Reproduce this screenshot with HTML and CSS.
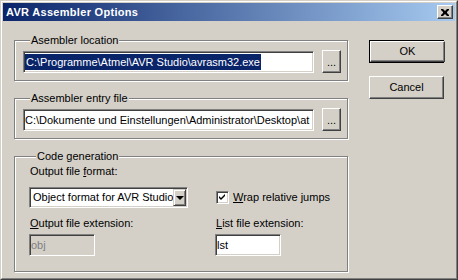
FILE: index.html
```html
<!DOCTYPE html>
<html lang="de">
<head>
  <meta charset="UTF-8">
  <title>AVR Assembler Options</title>
  <link rel="stylesheet" href="styles.css">
</head>
<body>
  <div class="window">
    <div class="frame">
      <div class="titlebar">
        <span class="title">AVR Assembler Options</span>
        <span class="close">
          <svg width="8" height="7" viewBox="0 0 8 7"><path d="M0 0h2l2 2l2 -2h2v1l-2 2v1l2 2v1h-2l-2 -2l-2 2h-2v-1l2 -2v-1l-2 -2z" fill="#000"/></svg>
        </span>
      </div>

      <div class="client">
        <div class="groups">
          <fieldset class="group">
            <legend>Asembler location</legend>
            <div class="path-row">
              <div class="edit path"><span class="selected">C:\Programme\Atmel\AVR Studio\avrasm32.exe</span></div>
              <div class="btn browse">...</div>
            </div>
          </fieldset>

          <fieldset class="group">
            <legend>Assembler entry file</legend>
            <div class="path-row">
              <div class="edit path">C:\Dokumente und Einstellungen\Administrator\Desktop\at</div>
              <div class="btn browse">...</div>
            </div>
          </fieldset>

          <fieldset class="group code-gen">
            <legend>Code generation</legend>
            <div class="gen-grid">
              <div class="label format-label">Output file <u>f</u>ormat:</div>
              <div class="combo">
                <span class="combo-text">Object format for AVR Studio</span>
                <span class="combo-btn"><span class="arrow"></span></span>
              </div>
              <div class="check-row">
                <span class="checkbox">
                  <svg width="7" height="7" viewBox="0 0 7 7"><path d="M6 0v2l-4 4l-2 -2v-2l2 2z" fill="#000"/></svg>
                </span>
                <span><u>W</u>rap relative jumps</span>
              </div>
              <div class="label"><u>O</u>utput file extension:</div>
              <div class="label"><u>L</u>ist file extension:</div>
              <div class="edit small disabled">obj</div>
              <div class="edit small">lst</div>
            </div>
          </fieldset>
        </div>

        <div class="actions">
          <div class="default-ring"><div class="btn action">OK</div></div>
          <div class="btn action">Cancel</div>
        </div>
      </div>
    </div>
  </div>
</body>
</html>
```

FILE: styles.css
```css
body {
  margin: 0;
  background: #d4d0c8;
  font-family: "Liberation Sans", Arial, sans-serif;
  font-size: 11px;
  line-height: 13px;
  color: #000;
}

.window {
  width: 458px;
  height: 280px;
  box-sizing: border-box;
  border: 1px solid;
  border-color: #d4d0c8 #404040 #404040 #d4d0c8;
  background: #d4d0c8;
}

.frame {
  height: 100%;
  box-sizing: border-box;
  border: 1px solid;
  border-color: #fff #808080 #808080 #fff;
  padding: 1px;
}

/* title bar */
.titlebar {
  height: 18px;
  display: flex;
  align-items: center;
  justify-content: space-between;
  padding: 0 2px 0 3px;
  background: linear-gradient(to right, #0a246a, #a6caf0);
  color: #fff;
  font-weight: bold;
}

.title {
  letter-spacing: 0.3px;
}

.close {
  width: 16px;
  height: 14px;
  box-sizing: border-box;
  display: flex;
  align-items: center;
  justify-content: center;
  background: #d4d0c8;
  border: 1px solid;
  border-color: #fff #404040 #404040 #fff;
  box-shadow: inset -1px -1px 0 #808080;
}

/* client area */
.client {
  display: flex;
  padding: 13px 0 0 11px;
}

.groups {
  width: 334px;
}

.group {
  margin: 0 0 11px;
  padding: 3px 0 7px 8px;
  min-width: 0;
  border: 1px solid #808080;
  box-shadow: inset 1px 1px 0 #fff, 1px 1px 0 #fff;
}

.group legend {
  margin-left: 7px;
  padding: 0 1px;
  background: #d4d0c8;
}

.path-row {
  display: flex;
  align-items: flex-start;
}

/* sunken edit boxes */
.edit {
  box-sizing: border-box;
  height: 22px;
  padding: 2px 1px 0;
  background: #fff;
  border: 1px solid;
  border-color: #808080 #fff #fff #808080;
  box-shadow: inset 1px 1px 0 #404040, inset -1px -1px 0 #d4d0c8;
  white-space: nowrap;
  overflow: hidden;
  line-height: 16px;
}

.path {
  width: 291px;
  margin-top: 1px;
}

.selected {
  background: #0a246a;
  color: #fff;
  display: inline-block;
  padding: 0 1px;
}

.small {
  width: 66px;
}

.disabled {
  background: #d4d0c8;
  color: #808080;
}

/* raised buttons */
.btn {
  box-sizing: border-box;
  display: flex;
  align-items: center;
  justify-content: center;
  background: #d4d0c8;
  border: 1px solid;
  border-color: #fff #404040 #404040 #fff;
  box-shadow: inset -1px -1px 0 #808080;
}

.browse {
  width: 19px;
  height: 23px;
  margin-left: 8px;
  padding-top: 2px;
}

.code-gen {
  margin-bottom: 0;
  padding: 2px 0 10px 14px;
}

.gen-grid {
  display: grid;
  grid-template-columns: 186px 1fr;
  grid-template-rows: 13px 21px 13px 22px;
  row-gap: 9px;
}

.format-label {
  grid-column: 1 / 3;
}

.label {
  padding-left: 1px;
}

.gen-grid .edit {
  margin-top: -5px;
}

.combo {
  width: 159px;
  height: 21px;
  box-sizing: border-box;
  display: flex;
  justify-content: space-between;
  background: #fff;
  border: 1px solid;
  border-color: #808080 #fff #fff #808080;
  box-shadow: inset 1px 1px 0 #404040, inset -1px -1px 0 #d4d0c8;
  padding: 1px;
}

.combo-text {
  padding: 2px 0 0 2px;
  white-space: nowrap;
}

.combo-btn {
  width: 16px;
  height: 17px;
  box-sizing: border-box;
  display: flex;
  align-items: center;
  justify-content: center;
  background: #d4d0c8;
  border: 1px solid;
  border-color: #d4d0c8 #404040 #404040 #d4d0c8;
  box-shadow: inset 1px 1px 0 #fff, inset -1px -1px 0 #808080;
}

.arrow {
  width: 0;
  height: 0;
  border-left: 4px solid transparent;
  border-right: 4px solid transparent;
  border-top: 4px solid #000;
}

.check-row {
  display: flex;
  align-items: center;
  gap: 4px;
  padding-left: 1px;
}

.checkbox {
  width: 13px;
  height: 13px;
  box-sizing: border-box;
  display: flex;
  align-items: center;
  justify-content: center;
  background: #fff;
  border: 1px solid;
  border-color: #808080 #fff #fff #808080;
  box-shadow: inset 1px 1px 0 #404040, inset -1px -1px 0 #d4d0c8;
}

/* OK / Cancel */
.actions {
  display: flex;
  flex-direction: column;
  gap: 13px;
  margin: 6px 0 0 21px;
}

.default-ring {
  border: 1px solid #000;
  width: 75px;
  height: 23px;
  box-sizing: border-box;
}

.default-ring .btn {
  height: 100%;
}

.action {
  width: 75px;
  height: 23px;
}
```
